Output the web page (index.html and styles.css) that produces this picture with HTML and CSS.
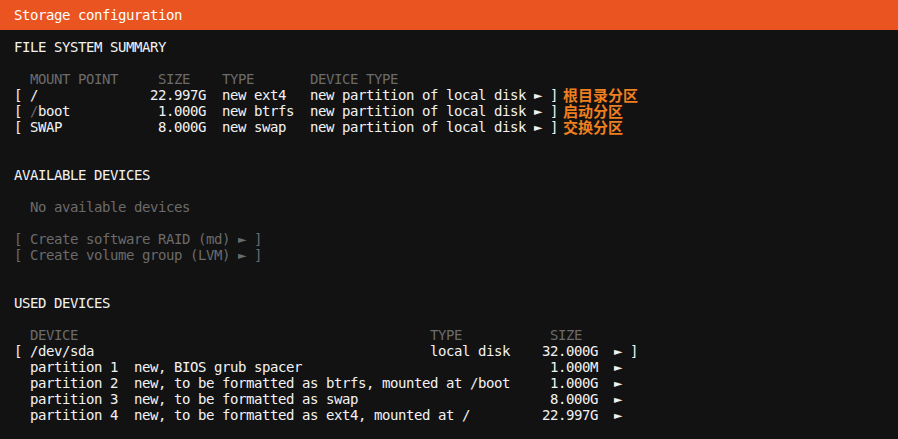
FILE: index.html
```html
<!DOCTYPE html>
<html>
<head>
<meta charset="utf-8">
<link rel="stylesheet" href="styles.css">
</head>
<body>
<div class="titlebar">Storage configuration</div>
<div class="screen">
<div class="line">FILE SYSTEM SUMMARY</div>
<div class="line"></div>
<div class="line dim">  MOUNT POINT     SIZE    TYPE       DEVICE TYPE</div>
<div class="line">[ /              22.997G  new ext4   new partition of local disk ► ]<span class="note">根目录分区</span></div>
<div class="line">[ <span class="dim">/</span>boot           1.000G  new btrfs  new partition of local disk ► ]<span class="note">启动分区</span></div>
<div class="line">[ SWAP            8.000G  new swap   new partition of local disk ► ]<span class="note">交换分区</span></div>
<div class="line"></div>
<div class="line"></div>
<div class="line">AVAILABLE DEVICES</div>
<div class="line"></div>
<div class="line dim">  No available devices</div>
<div class="line"></div>
<div class="line dim">[ Create software RAID (md) ► ]</div>
<div class="line dim">[ Create volume group (LVM) ► ]</div>
<div class="line"></div>
<div class="line"></div>
<div class="line">USED DEVICES</div>
<div class="line"></div>
<div class="line dim">  DEVICE                                            TYPE           SIZE</div>
<div class="line">[ /dev/sda                                          local disk    32.000G  ► ]</div>
<div class="line">  partition 1  new, BIOS grub spacer                               1.000M  ►</div>
<div class="line">  partition 2  new, to be formatted as btrfs, mounted at /boot     1.000G  ►</div>
<div class="line">  partition 3  new, to be formatted as swap                        8.000G  ►</div>
<div class="line">  partition 4  new, to be formatted as ext4, mounted at /         22.997G  ►</div>
</div>
</body>
</html>
```
FILE: styles.css
```css
html, body {
  margin: 0;
  padding: 0;
  background: #121212;
}
body {
  width: 898px;
  height: 439px;
  overflow: hidden;
  color: #f2f2f2;
  font-family: "DejaVu Sans Mono", monospace;
  font-size: 14px;
  letter-spacing: -0.43px;
}
.titlebar {
  height: 30px;
  line-height: 30px;
  padding-left: 14px;
  background: #e95420;
  color: #ffffff;
  white-space: pre;
}
.screen {
  padding: 9px 14px 0;
}
.line {
  height: 16px;
  line-height: 16px;
  white-space: pre;
}
.dim {
  color: #6b6b6b;
}
.note {
  display: inline-block;
  vertical-align: top;
  height: 16px;
  line-height: 16px;
  margin-left: 5px;
  font-family: "Noto Sans CJK SC", sans-serif;
  font-weight: 700;
  font-size: 15px;
  letter-spacing: 0;
  color: #f07f1f;
}
```
